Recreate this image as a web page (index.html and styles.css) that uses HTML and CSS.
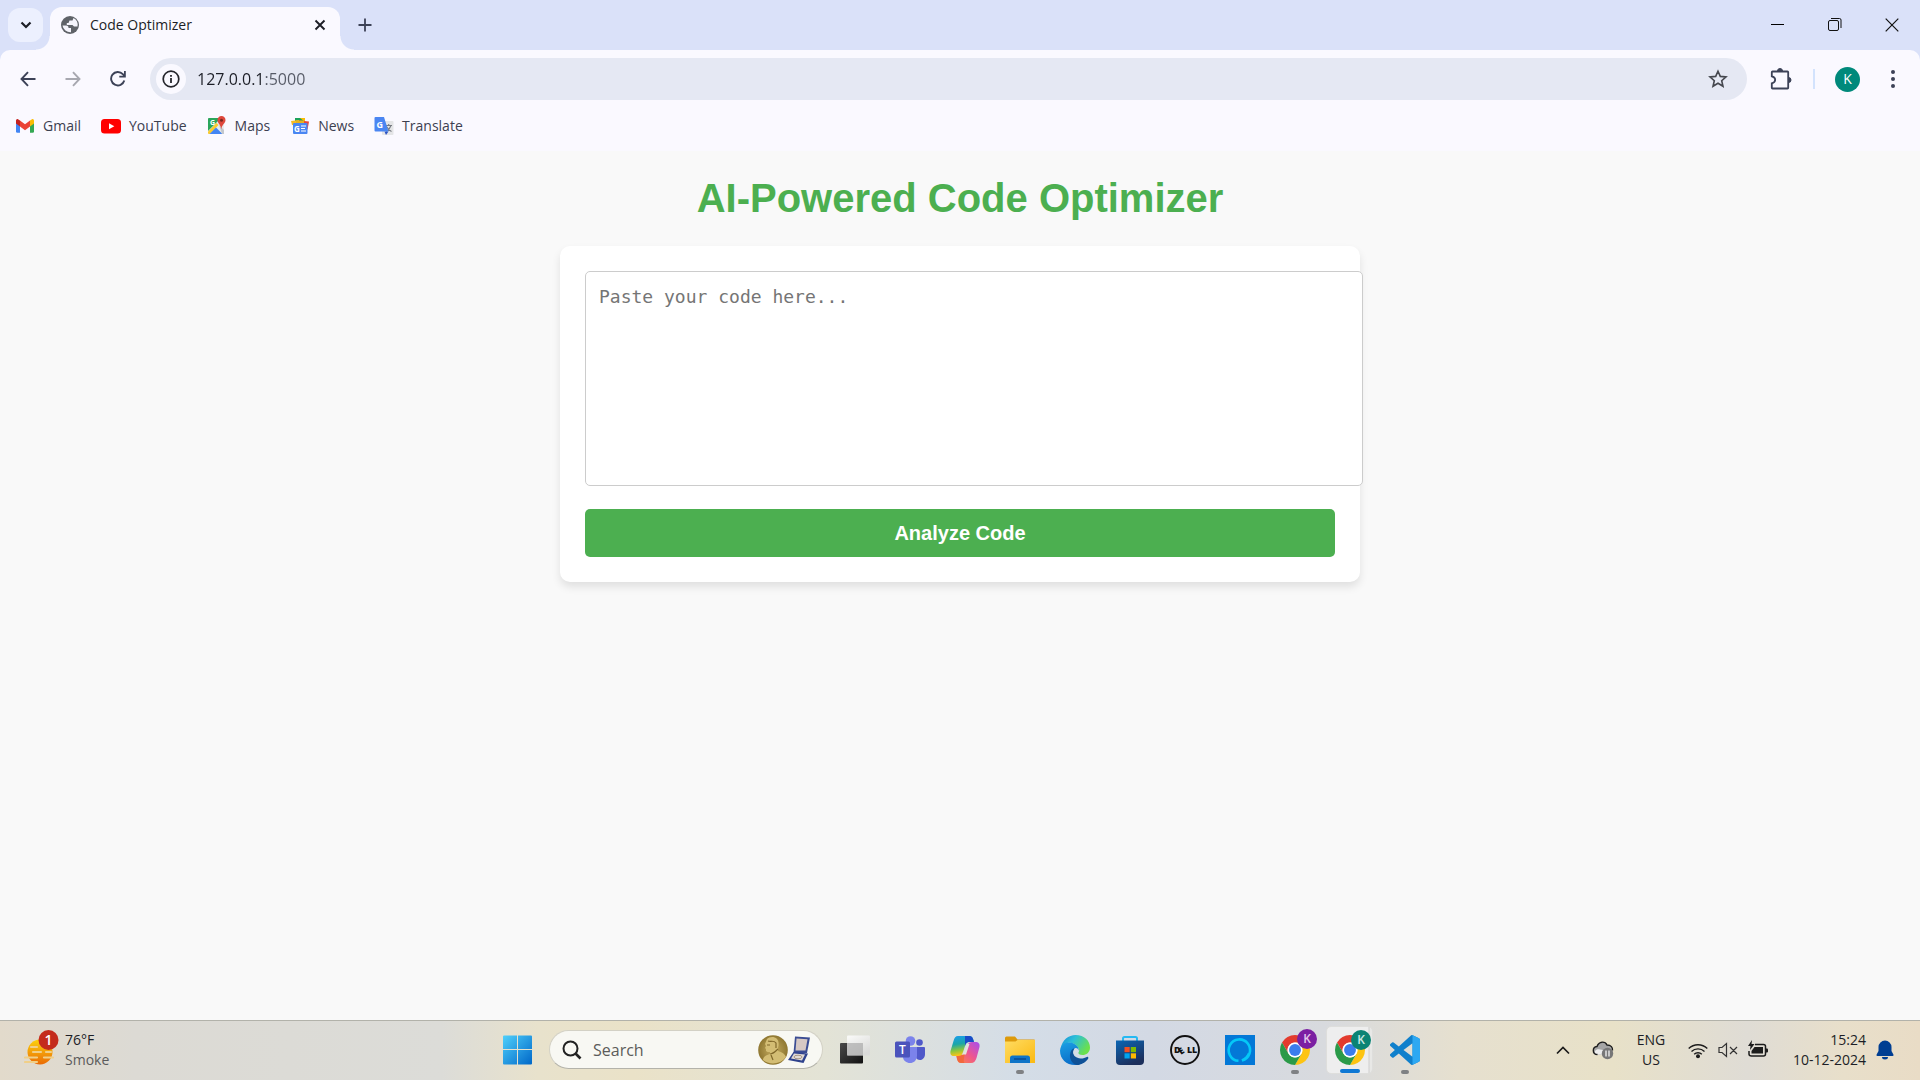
FILE: index.html
```html
<!DOCTYPE html>
<html lang="en">
<head>
<meta charset="utf-8">
<meta name="viewport" content="width=device-width, initial-scale=1">
<title>Code Optimizer</title>
<link rel="stylesheet" href="styles.css">
</head>
<body>
<header class="browser">
  <div class="tabstrip">
    <button class="tab-search" aria-label="Search tabs"><svg width="14" height="14" viewBox="0 0 14 14"><path d="M2.500 4.500l4.500 4.500 4.500-4.500" fill="none" stroke="#1c1e26" stroke-width="2.200"/></svg></button>
    <div class="tab">
      <svg width="20" height="20" viewBox="0 0 20 20"><circle cx="10" cy="10" r="9" fill="#5f6368"/><path d="M2.500 10.500h3.500c2 0 2.500 1 2.500 2.500h2.500v4.300A8 8 0 0 1 2.500 10.500zM13.500 3l-1 2.500H9.500L8.500 8H6.800v2h5.700l1.500 1.500h3.500a8 8 0 0 0-4-8.500z" fill="#f4f4fb"/></svg>
      <span class="tab-title">Code Optimizer</span>
      <button class="plain tab-close" aria-label="Close tab"><svg width="12" height="12" viewBox="0 0 12 12"><path d="M1.500 1.500l9 9m0-9l-9 9" stroke="#1c1e26" stroke-width="1.900"/></svg></button>
    </div>
    <button class="plain new-tab" aria-label="New tab"><svg width="14" height="14" viewBox="0 0 14 14"><path d="M7 .5v13M.5 7h13" stroke="#3c4257" stroke-width="1.800"/></svg></button>
    <div class="window-controls">
      <button class="plain" aria-label="Minimize"><svg width="14" height="14" viewBox="0 0 14 14"><path d="M0 6.500h13" stroke="#000"/></svg></button>
      <button class="plain" aria-label="Restore"><svg width="14" height="14" viewBox="0 0 14 14"><g fill="none" stroke="#111"><rect x=".5" y="2.500" width="10" height="10" rx="1.500"/><path d="M3 .5h8.500a1.500 1.500 0 0 1 1.500 1.500V10"/></g></svg></button>
      <button class="plain" aria-label="Close"><svg width="14" height="14" viewBox="0 0 14 14"><path d="M.7.7l12.600 12.600m0-12.600L.7 13.300" stroke="#111" stroke-width="1.200"/></svg></button>
    </div>
  </div>
  <div class="toolbar">
    <nav class="nav-buttons" aria-label="History">
      <button class="plain" aria-label="Back"><svg width="16" height="16" viewBox="0 0 16 16"><path d="M15.500 8H2M8 1.200L1.500 8 8 14.800" fill="none" stroke="#3c4257" stroke-width="1.900"/></svg></button>
      <button class="plain" aria-label="Forward"><svg width="16" height="16" viewBox="0 0 16 16"><path d="M.5 8H14M8 1.200L14.500 8 8 14.800" fill="none" stroke="#a7a8b0" stroke-width="1.900"/></svg></button>
      <button class="plain" aria-label="Reload"><svg width="16" height="16" viewBox="0 0 16 16"><path d="M14.300 9.500A6.700 6.700 0 1 1 12.800 3.200L14.500 5" fill="none" stroke="#3c4257" stroke-width="1.900"/><path d="M15.800 0v6.500H9.300V4.700H14V0z" fill="#3c4257"/></svg></button>
    </nav>
    <div class="omnibox">
      <button class="site-info" aria-label="Site information"><svg width="18" height="18" viewBox="0 0 18 18"><circle cx="9" cy="9" r="7.800" fill="none" stroke="#25262c" stroke-width="1.700"/><path d="M8.100 8h1.800v5H8.100zM8.100 5h1.800v1.800H8.100z" fill="#25262c"/></svg></button>
      <input class="address" type="text" aria-label="Address" value="127.0.0.1:5000">
      <button class="plain" aria-label="Bookmark this page"><svg width="20" height="20" viewBox="0 0 20 20"><path d="M10 2.200l2.300 5.200 5.700.5-4.300 3.800 1.300 5.600-5-3-5 3 1.300-5.600L2 7.900l5.700-.5z" fill="none" stroke="#45474e" stroke-width="1.600"/></svg></button>
    </div>
    <div class="actions">
      <button class="plain" aria-label="Extensions"><svg width="22" height="22" viewBox="0 0 22 22"><path d="M2.500 3.500h15a.7.700 0 0 1 .7.700v15.600a.7.700 0 0 1-.7.700h-15a.7.700 0 0 1-.7-.7v-4.500c4.500-1 4.500-6 0-7V4.200a.7.700 0 0 1 .7-.7z" fill="none" stroke="#3c4257" stroke-width="1.800"/><path d="M7.500 3a2.500 2.500 0 0 1 5 0zM18.500 9.500a2.500 2.500 0 0 1 0 5z" fill="#3c4257" stroke="#3c4257"/></svg></button>
      <span class="divider"></span>
      <button class="profile" aria-label="Profile">K</button>
      <button class="plain" aria-label="Menu"><svg width="6" height="20" viewBox="0 0 6 20"><g fill="#3c4257"><circle cx="3" cy="3" r="2"/><circle cx="3" cy="10" r="2"/><circle cx="3" cy="17" r="2"/></g></svg></button>
    </div>
  </div>
  <nav class="bookmarks" aria-label="Bookmarks">
    <a href="#gmail"><svg width="20" height="20" viewBox="0 0 20 20"><path d="M1 5v10.500a1.300 1.300 0 0 0 1.300 1.300H5V8z" fill="#4285f4"/><path d="M19 5v10.500a1.300 1.300 0 0 1-1.300 1.300H15V8z" fill="#34a853"/><path d="M15 4.500L17 3.300c1-.6 2 .3 2 1.500v2.700l-4 3z" fill="#fbbc04"/><path d="M5 4.500l5 3.700 5-3.700v6l-5 3.700-5-3.700z" fill="#ea4335"/><path d="M5 4.500L3 3.300c-1-.6-2 .3-2 1.500v2.700l4 3z" fill="#c5221f"/></svg>Gmail</a>
    <a href="#youtube"><svg width="20" height="20" viewBox="0 0 20 20"><rect y="3" width="20" height="14.500" rx="3.500" fill="#f00"/><path d="M8 7.200l5.300 3L8 13.200z" fill="#fff"/></svg>YouTube</a>
    <a href="#maps"><svg width="20" height="20" viewBox="0 0 20 20"><rect x="1" y="2" width="16" height="16" rx="1" fill="#e8eaed"/><path d="M1 3a1 1 0 0 1 1-1h12L1 15z" fill="#2aa65a"/><path d="M1 15.500L9.500 7l2 2L3 18H2a1 1 0 0 1-1-1z" fill="#fbcb2e"/><path d="M2.500 18L9 11.500l6.500 6.500z" fill="#4285f4"/><path d="M15 18h2V14l-5-5z" fill="#c3c7cc"/><path d="M14.500 0a4 4 0 0 0-4 4.200c0 3 3.300 4.300 3.800 9 .5-4.700 4.200-6 4.200-9a4 4 0 0 0-4-4.200z" fill="#de483c"/><circle cx="14.500" cy="4.200" r="1.500" fill="#7a2820"/><text x="3" y="9" class="logo-letter" font-size="7">G</text></svg>Maps</a>
    <a href="#news"><svg width="20" height="20" viewBox="0 0 20 20"><path d="M5 2h10v5H5z" fill="#1ba25a"/><path d="M10 2h5v4z" fill="#fbbc04"/><path d="M1 5l8-1v5H2z" fill="#f7bb24"/><path d="M9 4.500l10 1-1.500 8H10z" fill="#e94639"/><path d="M6 4.500h8V8H6z" fill="#e9b21e"/><rect x="3" y="7" width="14.500" height="11" rx="1" fill="#4a86f2"/><text x="4" y="15.500" class="logo-letter" font-size="8">G</text><path d="M11 10h5M11 12.500h4M11 15h5" stroke="#fff" stroke-width="1.200"/></svg>News</a>
    <a href="#translate"><svg width="20" height="20" viewBox="0 0 20 20"><rect x="8" y="5" width="11.500" height="14" rx="1" fill="#e4e5e7"/><path d="M11.500 9.500H18M14.700 8v1.500M17 9.500c-1 3-3 5-5 6M12.500 10.500c1 2 3 4 5 5" fill="none" stroke="#777b82" stroke-width="1.100"/><path d="M10.500 15.500h4L12 19z" fill="#2c53c3"/><path d="M1.500 1H10l4.500 14.500h-13a1 1 0 0 1-1-1V2a1 1 0 0 1 1-1z" fill="#4a86f2"/><text x="2.500" y="11.500" class="logo-letter" font-size="9">G</text></svg>Translate</a>
  </nav>
</header>

<main class="page">
  <h1>AI-Powered Code Optimizer</h1>
  <form class="card">
    <textarea class="code-input" aria-label="Code" placeholder="Paste your code here..."></textarea>
    <button class="analyze" type="button">Analyze Code</button>
  </form>
</main>

<svg class="defs" aria-hidden="true">
  <defs>
    <g id="chrome">
      <path d="M24 12h20.780A24 24 0 0 0 3.220 12l10.390 18A12 12 0 0 1 24 12z" fill="#e33b2e"/>
      <path d="M34.390 30L24 48A24 24 0 0 0 44.780 12H24a12 12 0 0 1 10.390 18z" fill="#fdc412"/>
      <path d="M13.610 30L3.220 12A24 24 0 0 0 24 48l10.390-18a12 12 0 0 1-20.780 0z" fill="#2a9a48"/>
      <circle cx="24" cy="24" r="12" fill="#fff"/><circle cx="24" cy="24" r="9.500" fill="#3b7ded"/>
    </g>
    <linearGradient id="win" x2="1" y2="1"><stop stop-color="#4fd0fb"/><stop offset="1" stop-color="#0067c8"/></linearGradient>
    <linearGradient id="sun" y2="1" x2="0"><stop stop-color="#fcd20c"/><stop offset="1" stop-color="#ea6a05"/></linearGradient>
    <linearGradient id="dark" y2="1" x2="1"><stop stop-color="#4a4a4a"/><stop offset="1" stop-color="#111"/></linearGradient>
    <linearGradient id="light" y2="1" x2=".6"><stop stop-color="#fff"/><stop offset="1" stop-color="#d9d9d9"/></linearGradient>
    <linearGradient id="cp1" x2=".2" y2="1"><stop stop-color="#1c9df0"/><stop offset=".45" stop-color="#1aa6a8"/><stop offset=".75" stop-color="#8cc63c"/><stop offset="1" stop-color="#fbc318"/></linearGradient>
    <linearGradient id="cp2" x1="1" x2="0" y2="1"><stop stop-color="#a64df0"/><stop offset=".5" stop-color="#ed5590"/><stop offset="1" stop-color="#ff8a3c"/></linearGradient>
    <linearGradient id="folder" x2="1" y2="1"><stop stop-color="#ffdc62"/><stop offset="1" stop-color="#fbb911"/></linearGradient>
    <linearGradient id="edge1" x2="1" y2=".5"><stop stop-color="#1488d8"/><stop offset=".45" stop-color="#2cc0d8"/><stop offset="1" stop-color="#6be04c"/></linearGradient>
    <linearGradient id="edge2" y2="1" x2=".4"><stop stop-color="#1ba0e4"/><stop offset="1" stop-color="#0a6cc8"/></linearGradient>
    <linearGradient id="store" y2="1" x2=".5"><stop stop-color="#0c66b4"/><stop offset="1" stop-color="#1c2f5c"/></linearGradient>
    <radialGradient id="gold"><stop stop-color="#c6ae62"/><stop offset="1" stop-color="#8f7731"/></radialGradient>
  </defs>
</svg>

<footer class="taskbar">
  <button class="plain weather">
    <svg width="36" height="36" viewBox="0 0 36 36"><circle cx="16" cy="22" r="12.500" fill="url(#sun)"/><path d="M7 17h6M1 27.500h12M20 27.500h9M9 22h8M22 22h5M1 32h12" stroke="#f0cf88" stroke-width="2.200" stroke-linecap="round"/><circle cx="24.500" cy="10" r="10" fill="#c42b1c"/><text x="24.500" y="15" class="badge-text" font-size="14">1</text></svg>
    <span class="two-lines"><span>76°F</span><span class="muted">Smoke</span></span>
  </button>
  <div class="apps">
    <button class="app" aria-label="Start"><svg width="30" height="30" viewBox="0 0 30 30"><path d="M0 1.500Q0 .5 1 .5H14V14H0zM15 .5H28q1 0 1 1V14H15zM0 15H14V29.500H1q-1 0-1-1zM15 15H29V28.500q0 1-1 1H15z" fill="url(#win)"/></svg></button>
    <label class="search">
      <svg width="20" height="20" viewBox="0 0 20 20"><circle cx="8.500" cy="8.500" r="7" fill="none" stroke="#222" stroke-width="2"/><path d="M13.500 13.500l5 5" stroke="#222" stroke-width="2.600"/></svg>
      <input type="text" placeholder="Search" aria-label="Search">
      <svg width="54" height="32" viewBox="0 0 54 32"><circle cx="16" cy="16" r="14.800" fill="url(#gold)"/><path d="M10 5c2-2 7-3 10 0 2 2 2 6 1 9l0 3c4 1 7 3 8 6-6 8-17 8-23 3 0-3 3-5 7-6v-2c-2 0-3 0-4-1l0-2-1-1 1-2-1-2z" fill="#d3bd74"/><path d="M13 20c3 0 5-2 8-5M11 7c3 1 6-1 8 2l0 5M14 21l2 5M10 11h3" fill="none" stroke="#80682a" stroke-width="1.200"/><path d="M38 2.500L53 3.500 50 19H36.500z" fill="#3b4c93"/><path d="M39.500 4.500L50.500 5.200 48.500 16.500H38.500z" fill="#d6c8c4"/><path d="M36.500 18L51 19.500 46.500 29 31 26z" fill="#2f428d"/><path d="M37 19.500l11 1-3 6-11-2z" fill="#e1dad6"/><ellipse cx="41" cy="23" rx="4" ry="1.800" fill="none" stroke="#a69686"/></svg>
    </label>
    <button class="app" aria-label="Task view"><svg width="30" height="30" viewBox="0 0 30 30"><rect y="8" width="23" height="20.500" rx="1" fill="url(#dark)"/><rect x="7" y=".5" width="23" height="20" rx="1" fill="url(#light)" opacity=".85"/><path d="M7 8h16v12.500H7z" fill="#b5b5b5" opacity=".7"/></svg></button>
    <button class="app" aria-label="Teams"><svg width="30" height="30" viewBox="0 0 30 30"><circle cx="15.500" cy="6" r="4.800" fill="#7b83eb"/><circle cx="24.500" cy="7.500" r="3.300" fill="#5059c9"/><path d="M21 12h8q1 0 1 1v6c0 4-3 6-5 6s-4-1-4-3z" fill="#5059c9"/><path d="M8 12h14v8.500c0 5-3.500 7.500-7 7.500s-7-2.500-7-6z" fill="#7b83eb"/><rect y="6.500" width="15" height="16" rx="1.500" fill="#4b53bc"/><text x="7.500" y="18.500" class="badge-text" font-size="12">T</text></svg></button>
    <button class="app" aria-label="Copilot"><svg width="30" height="30" viewBox="0 0 30 30"><path d="M22 7h3c4 0 5 2 4.500 5l-3 11c-1 3-2.500 5-5.500 5H12c-3 0-4-1-5-4l-1-4h5c3 0 4-2 5-5l2-6q1-2 4-2z" fill="url(#cp2)"/><path d="M15 28H11c-3 0-4-3-4.500-8H11q3 0 4-3l-1 6q-1 5 1 5z" fill="#f2683c"/><path d="M8 1h12c2 0 3 2 4 6h-5c-2 0-3 1-4 4l-2 6c-1 3-2 4-5 4H4c-3 0-4-2-3.500-5l3-10C4.500 2.500 5.500 1 8 1z" fill="url(#cp1)"/><path d="M15 1h5c2 0 3 2 4 6h-5q-3 0-4 4z" fill="#1a4bc8"/><path d="M17 9h2.500l-3.500 10.500h-4q2-1 3-4z" fill="#e4e4dc"/></svg></button>
    <button class="app running" aria-label="File Explorer"><svg width="30" height="30" viewBox="0 0 30 30"><path d="M0 3q0-1.500 1.500-1.500H10l2.500 3H29q1 0 1 1V10H0z" fill="#dd9a0b"/><path d="M0 6.500h10.500l2-1.500H30v23H0z" fill="url(#folder)"/><path d="M5 28v-5q0-2.500 2.500-2.500h15Q25 20.500 25 23v5z" fill="#0f74c8"/><path d="M9 24h12" stroke="#0a4a93" stroke-width="1.500"/></svg></button>
    <button class="app" aria-label="Edge"><svg width="30" height="30" viewBox="0 0 48 48"><path d="M1 22C3 8 14 0 25 0c14 0 23 9 23 20 0 8-6 12-12 12-5 0-7-2-6.500-4 1.500-2 1.500-4 .5-6C27 15 18 11 11 13 6 14 3 18 1 22z" fill="url(#edge1)"/><path d="M0 25C1 15 8 11 16 12c8 1 14 6 14 13-2-5-6-5-8-2-3 4-1 12 5 16 6 3 13 2 18-2-5 7-13 11-21 11C10 48 0 38 0 25z" fill="url(#edge2)"/><path d="M16 31c1-6 3-9 7-10-4 6-2 12 4 15s12 1 16-1c2-1 3 1 2 3-4 6-12 10-18 10-7-2-12-9-11-17z" fill="#0f5197"/></svg></button>
    <button class="app" aria-label="Microsoft Store"><svg width="30" height="30" viewBox="0 0 30 30"><path d="M8 6V3.500Q8 2 9.500 2h11Q22 2 22 3.500V6" fill="none" stroke="#25b9f2" stroke-width="2"/><path d="M1 5.500h28V26q0 4-4 4H5q-4 0-4-4z" fill="url(#store)"/><path d="M9.500 12h5.200v5.200H9.500z" fill="#f25022"/><path d="M15.800 12H21v5.200h-5.200z" fill="#7fba00"/><path d="M9.500 18.300h5.200v5.200H9.500z" fill="#00a4ef"/><path d="M15.800 18.300H21v5.200h-5.200z" fill="#ffb900"/></svg></button>
    <button class="app" aria-label="Dell"><svg width="30" height="30" viewBox="0 0 30 30"><circle cx="15" cy="15" r="14" fill="none" stroke="#111" stroke-width="1.900"/><text x="4 11 17 22" y="18 20 18 18" rotate="0 -35 0 0" class="dell" font-size="9">DELL</text></svg></button>
    <button class="app" aria-label="Alexa"><svg width="30" height="30" viewBox="0 0 30 30"><path d="M0 0h30v30H0z" fill="#0378d7"/><path d="M13.500 25.800A10.700 10.700 0 1 1 17 25.500c4-2 6-4 7-7" fill="none" stroke="#05c8f7" stroke-width="2.600"/></svg></button>
    <button class="app running" aria-label="Chrome, purple profile"><svg width="30" height="30" viewBox="0 0 48 48"><use href="#chrome"/></svg><span class="account purple">K</span></button>
    <button class="app running active" aria-label="Chrome, green profile"><svg width="30" height="30" viewBox="0 0 48 48"><use href="#chrome"/></svg><span class="account">K</span></button>
    <button class="app running" aria-label="Visual Studio Code"><svg width="30" height="30" viewBox="0 0 24 24"><path d="M23.150 2.587L18.210.21a1.494 1.494 0 0 0-1.705.29l-9.460 8.630-4.120-3.128a.999.999 0 0 0-1.276.057L.327 7.261A1 1 0 0 0 .326 8.740L3.899 12 .326 15.260a1 1 0 0 0 .001 1.479L1.650 17.940a.999.999 0 0 0 1.276.057l4.120-3.128 9.460 8.630a1.492 1.492 0 0 0 1.704.29l4.942-2.377A1.500 1.500 0 0 0 24 20.060V3.939a1.500 1.500 0 0 0-.85-1.352zm-5.146 14.861L10.826 12l7.178-5.448v10.896z" fill="#1080cc"/><path d="M18 .2l5.150 2.387A1.500 1.500 0 0 1 24 3.940v16.120a1.500 1.500 0 0 1-.85 1.350L18 23.800z" fill="#2da8f2"/></svg></button>
  </div>
  <div class="tray">
    <button class="plain" aria-label="Hidden icons"><svg width="16" height="10" viewBox="0 0 16 10"><path d="M2 8.500l6-6 6 6" fill="none" stroke="#1a1a1a" stroke-width="1.700"/></svg></button>
    <button class="plain cloud" aria-label="OneDrive"><svg width="22" height="22" viewBox="0 0 22 22"><path d="M5.500 15.500C0 15.500 0 8 5 7.500 7 2 13 2 15 6c4 0 6 2.500 5.500 5.500l-5 4z" fill="#a5a5a5"/><path d="M3 14.500c-1-3 2-5 5-4l6 1-3 4H5z" fill="#ededed"/><path d="M5.500 15.500C0 15.500 0 8 5 7.500 7 2 13 2 15 6c4 0 6 2.500 5.500 5.500" fill="none" stroke="#1e1e1e" stroke-width="1.400"/><circle cx="15.500" cy="14.500" r="5.700" fill="#777"/><path d="M14 11.500v6M17 11.500v6" stroke="#fff" stroke-width="1.200"/></svg></button>
    <button class="plain two-lines language"><span>ENG</span><span>US</span></button>
    <button class="plain status" aria-label="Network, volume and battery">
      <svg width="20" height="20" viewBox="0 0 20 20"><g fill="none" stroke="#1c1c1c" stroke-width="1.400"><path d="M.7 8.500a13.300 13.300 0 0 1 18.600 0M3.500 11.500a9.300 9.300 0 0 1 13 0M6.200 14.300a5.400 5.400 0 0 1 7.600 0"/></g><circle cx="10" cy="16.200" r="2" fill="#1c1c1c"/></svg>
      <svg width="20" height="20" viewBox="0 0 20 20"><path d="M1 7.500h3L8.500 3.500v13L4 12.500H1zM12 7l7 7m0-7l-7 7" fill="none" stroke="#333" stroke-width="1.200"/></svg>
      <svg width="20" height="20" viewBox="0 0 20 20"><path d="M7 4.500h8.500q2 0 2 2V14q0 2-2 2h-12q-2.500 0-2.500-2v-3" fill="none" stroke="#1c1c1c" stroke-width="1.500"/><path d="M6.500 7H15v6.500H3.500V11z" fill="#1c1c1c"/><path d="M18 8.500h1q1 0 1 1v2q0 1-1 1h-1z" fill="#1c1c1c"/><path d="M4 0L0 6h2.500L2 10l4.500-6H3.500z" fill="#1c1c1c"/></svg>
    </button>
    <button class="plain two-lines clock"><span>15:24</span><span>10-12-2024</span></button>
    <button class="plain" aria-label="Notifications"><svg width="18" height="20" viewBox="0 0 18 20"><path d="M9 .5a6.500 6.500 0 0 1 6.500 6.500v4l2 3.800q.3 1.200-1 1.200h-15q-1.300 0-1-1.200l2-3.800V7A6.500 6.500 0 0 1 9 .5zM6 17h6a3 2.500 0 0 1-6 0z" fill="#003e92"/></svg></button>
  </div>
</footer>
</body>
</html>
```
FILE: styles.css
```css
* { box-sizing: border-box; }

body {
  margin: 0;
  min-height: 100vh;
  display: flex;
  flex-direction: column;
  background: #f9f9f9;
  font: 14px/20px "Open Sans", "Noto Sans", sans-serif;
  color: #1c1e26;
}

button, input, textarea { font: inherit; color: inherit; }
svg { display: block; flex: none; }
.defs { position: absolute; width: 0; height: 0; }

.plain {
  display: flex;
  align-items: center;
  justify-content: center;
  padding: 0;
  border: 0;
  background: none;
}

/* Browser frame */
.browser { background: #dae1f9; }

.tabstrip {
  display: flex;
  align-items: center;
  height: 50px;
  padding-left: 8px;
}

.tab-search {
  display: grid;
  place-items: center;
  width: 35px;
  height: 34px;
  margin-right: 7px;
  padding: 0;
  border: 0;
  border-radius: 12px;
  background: #ecf0fe;
}

.tab {
  position: relative;
  align-self: flex-end;
  display: flex;
  align-items: center;
  gap: 10px;
  width: 290px;
  height: 43px;
  padding: 0 14px 7px 10px;
  border-radius: 12px 12px 0 0;
  background: #faf9ff;
}

.tab::before, .tab::after {
  content: "";
  position: absolute;
  bottom: 0;
  width: 14px;
  height: 14px;
}
.tab::before { right: 100%; background: radial-gradient(circle at 0 0, transparent 13px, #faf9ff 14px); }
.tab::after { left: 100%; background: radial-gradient(circle at 100% 0, transparent 13px, #faf9ff 14px); }
.tab-title { flex: 1; }
.new-tab { width: 50px; height: 34px; }

.window-controls { display: flex; margin-left: auto; }
.window-controls .plain { width: 57px; height: 50px; }

.toolbar {
  display: flex;
  align-items: center;
  height: 58px;
  padding: 0 24px 0 20px;
  border-radius: 10px 10px 0 0;
  background: #faf9ff;
}

.nav-buttons { display: flex; gap: 29px; margin-right: 24px; }

.omnibox {
  flex: 1;
  display: flex;
  align-items: center;
  height: 42px;
  padding: 0 19px 0 6px;
  border-radius: 21px;
  background: #e5e8f3;
}

.site-info {
  display: grid;
  place-items: center;
  width: 30px;
  height: 30px;
  padding: 0;
  border: 0;
  border-radius: 50%;
  background: #faf9ff;
}

.address {
  flex: 1;
  min-width: 0;
  margin-left: 11px;
  padding: 0;
  border: 0;
  outline: 0;
  font-size: 16px;
  line-height: 24px;
  color: transparent;
  background: linear-gradient(90deg, #1c1e26 67px, #565a66 67px) text;
}

.actions { display: flex; align-items: center; }
.actions .divider { width: 2px; height: 20px; margin: 0 20px 0 21px; background: #d3e3fd; }
.actions .plain:first-child { margin-left: 23px; }

.profile {
  width: 25px;
  height: 25px;
  margin-right: 30px;
  padding: 0;
  border: 0;
  border-radius: 50%;
  background: #00897b;
  color: #fff;
}

.bookmarks {
  display: flex;
  gap: 20px;
  height: 43px;
  padding: 8px 15px 0;
  background: #faf9ff;
}
.bookmarks a {
  display: flex;
  gap: 8px;
  height: 20px;
  color: #3c4050;
  text-decoration: none;
}
.logo-letter { fill: #fff; font-family: "Open Sans", sans-serif; font-weight: 700; }

/* Page */
.page {
  flex: 1;
  padding: 25px;
  font-family: "Liberation Sans", Arial, sans-serif;
}

h1 {
  margin: 0 0 25px;
  font-size: 40px;
  line-height: 45px;
  text-align: center;
  color: #4caf50;
}

.card {
  max-width: 800px;
  margin: 0 auto;
  padding: 25px;
  border-radius: 10px;
  background: #fff;
  box-shadow: 0 5px 8px rgba(0, 0, 0, 0.1);
}

.code-input {
  box-sizing: content-box;
  display: block;
  width: 100%;
  height: 187px;
  margin-bottom: 23px;
  padding: 13px;
  border: 1px solid #ccc;
  border-radius: 5px;
  background: #fff;
  font: 18px/24px "DejaVu Sans Mono", monospace;
  resize: none;
}
.code-input::placeholder { color: #757575; }

.analyze {
  width: 100%;
  height: 48px;
  border: 0;
  border-radius: 5px;
  background: #4caf50;
  color: #fff;
  font-size: 20px;
  font-weight: 700;
}

/* Taskbar */
.taskbar {
  display: grid;
  grid-template-columns: 1fr auto 1fr;
  align-items: center;
  height: 60px;
  padding-bottom: 2px;
  border-top: 1px solid #b2b2aa;
  background: linear-gradient(90deg, #e2dacb, #dcdad4 7%, #dcdcd8 23%, #e8e2cc 28%, #eae2c8 33%, #e3e3d6 43%, #d4dde7 53%, #d3d9e4 60%, #d8dade 69%, #e6e0cf 76%, #e8e1c8 84%, #dfdcd5 91%, #e8dfca 96%, #e9dcc6);
}

.weather { justify-self: start; align-items: flex-start; gap: 5px; padding-left: 24px; }
.two-lines { display: flex; flex-direction: column; align-items: flex-start; }
.muted { color: #5b5b5b; }
.badge-text { fill: #fff; text-anchor: middle; font-family: "Open Sans", sans-serif; font-weight: 600; }
.dell { fill: #111; font-family: "Open Sans", sans-serif; font-weight: 800; }

.apps { display: flex; align-items: center; padding-left: 2px; }

.app {
  position: relative;
  display: grid;
  place-items: center;
  width: 55px;
  height: 48px;
  padding: 0;
  border: 0;
  background: none;
}

.running::after {
  content: "";
  position: absolute;
  bottom: 0;
  left: 24px;
  width: 8px;
  height: 4px;
  border-radius: 2px;
  background: #7f8184;
}

.active {
  width: 47px;
  margin: 0 4px;
  border: 1px solid #dededc;
  border-radius: 5px;
  background: linear-gradient(90deg, #eeeeee 41px, #cfcfcf 42px, #e8e8e6 43px);
}
.active::after { left: 13px; width: 20px; background: #0f78d4; }

.account {
  position: absolute;
  top: 3px;
  right: 5px;
  width: 20px;
  height: 20px;
  border-radius: 50%;
  background: #0b8374;
  color: #c9e8e4;
  font-size: 12px;
  font-weight: 600;
}
.active .account { right: 1px; }
.purple { background: #7b1fa2; color: #e3c8ec; }

.search {
  display: flex;
  align-items: center;
  width: 274px;
  height: 39px;
  margin: 0 4px;
  padding: 0 11px 0 12px;
  border: 1px solid #d3d1c5;
  border-bottom-color: #b4b3aa;
  border-radius: 20px;
  background: #f8f8f3;
}
.search input {
  flex: 1;
  min-width: 0;
  margin-left: 11px;
  padding: 0;
  border: 0;
  outline: 0;
  background: none;
  font-size: 16px;
}
.search input::placeholder { color: #5c5c5a; }

.tray {
  justify-self: end;
  display: flex;
  align-items: center;
  gap: 10px;
  padding-right: 26px;
}
.cloud { margin: 0 11px; }
.language { align-items: center; width: 32px; margin-right: 11px; }
.status { gap: 10px; }
.clock { align-items: flex-end; width: 80px; margin-left: 8px; }
```
